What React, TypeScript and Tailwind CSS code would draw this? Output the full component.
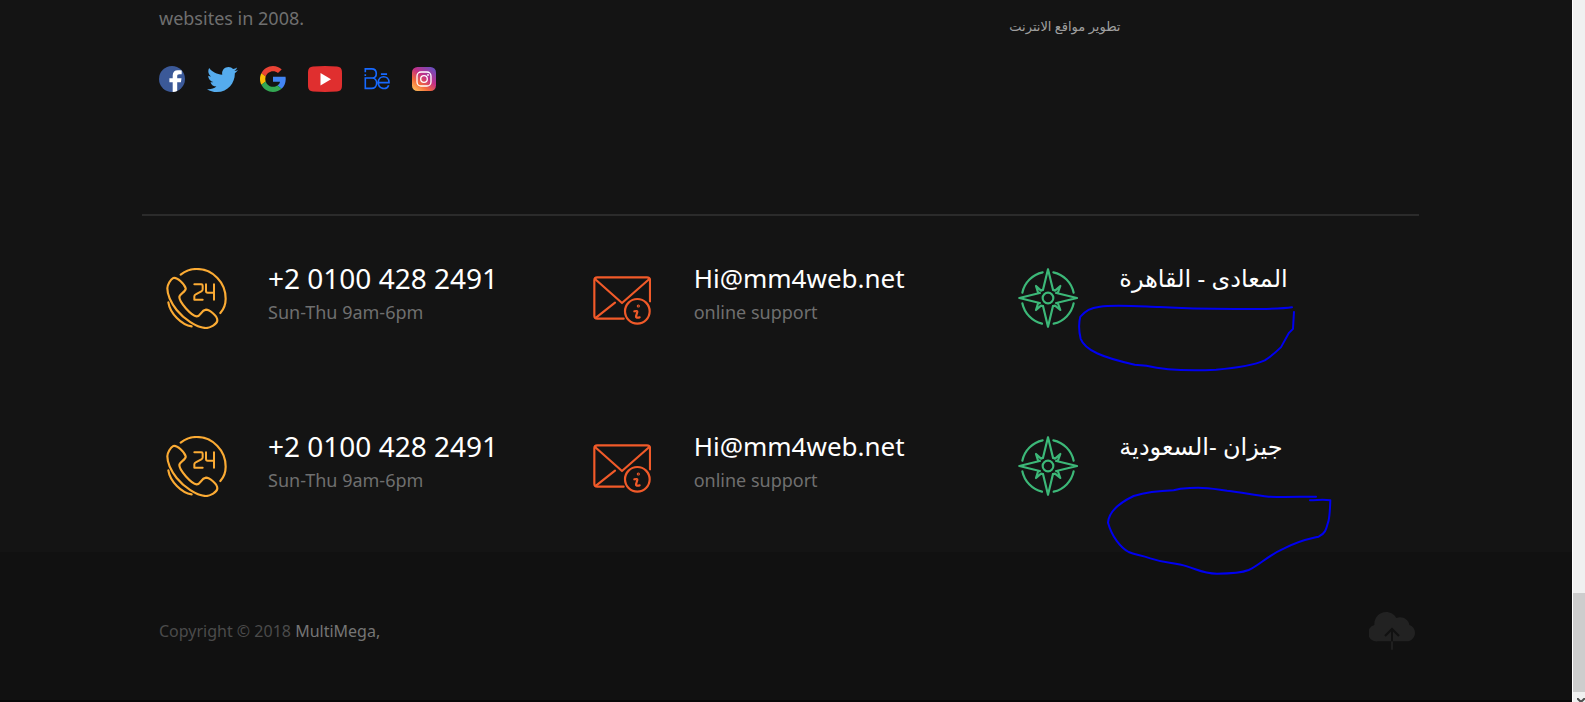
import { FaTwitter } from "react-icons/fa";

function FacebookIcon() {
  return (
    <svg viewBox="0 0 26 26" className="h-[26px] w-[26px]" aria-hidden="true">
      <circle cx="13" cy="13" r="13" fill="#3b5998" />
      <path
        d="M13.7 25.9v-9.600h-3.300v-4h3.300V9.600c0-3.500 2-5.300 5.100-5.300 1.500 0 2.800.1 3.900.3v3.700h-2.400c-1.700 0-2.100.8-2.100 2v2h4.300l-.6 4h-3.700v8.600a13 13 0 0 1-4.500 1z"
        fill="#fff"
      />
    </svg>
  );
}

function GoogleIcon() {
  return (
    <svg viewBox="0 0 48 48" className="h-[26px] w-[26px]" aria-hidden="true">
      <path fill="#EA4335" d="M24 9.5c3.54 0 6.71 1.22 9.21 3.6l6.85-6.85C35.9 2.38 30.47 0 24 0 14.62 0 6.51 5.38 2.56 13.22l7.98 6.19C12.43 13.72 17.74 9.5 24 9.5z" />
      <path fill="#4285F4" d="M47.5 24.55c0-1.57-.15-3.09-.38-4.55H24v9.02h12.94c-.58 2.96-2.26 5.48-4.78 7.18l7.73 6c4.51-4.18 7.61-10.36 7.61-17.65z" />
      <path fill="#FBBC05" d="M10.53 28.59c-.48-1.45-.76-2.99-.76-4.59s.27-3.14.76-4.59l-7.98-6.19C.92 16.46 0 20.12 0 24c0 3.88.92 7.54 2.56 10.78l7.97-6.19z" />
      <path fill="#34A853" d="M24 48c6.48 0 11.93-2.13 15.89-5.81l-7.73-6c-2.15 1.45-4.92 2.3-8.16 2.3-6.26 0-11.57-4.22-13.47-9.91l-7.98 6.19C6.51 42.62 14.62 48 24 48z" />
    </svg>
  );
}

function YoutubeIcon() {
  return (
    <svg viewBox="0 0 34 26" className="h-[26px] w-[34px]" aria-hidden="true">
      <path d="M5 .5Q17-.4 29 .5q4.600.3 4.900 4.500.4 8 0 16-.3 4.200-4.900 4.500-12 .9-24 0Q.4 25.200.1 21q-.4-8 0-16Q.4.800 5 .5z" fill="#e02f2f" />
      <path d="M12.500 7v12.400l10.500-6.200z" fill="#fff" />
    </svg>
  );
}

function BehanceIcon() {
  return (
    <svg viewBox="667 197 80 78" className="h-[26px] w-[26px]" fill="none" stroke="#1769ff" strokeWidth="5" aria-hidden="true">
      <path d="M671 215V205h20c18 0 18 27 2 28h-14M671 221v6M692 233c19 1 19 32-2 32h-19v-32h8M719 221h19M712 247h32c0-24-33-24-33 0 0 21 26 24 32 8" />
    </svg>
  );
}

function InstagramIcon() {
  return (
    <svg viewBox="0 0 24 24" className="h-6 w-6" fill="none" aria-hidden="true">
      <defs>
        <linearGradient id="insta" x1="2" y1="24" x2="20" y2="0" gradientUnits="userSpaceOnUse">
          <stop offset="0" stopColor="#ffc45c" />
          <stop offset=".3" stopColor="#f36b3b" />
          <stop offset=".6" stopColor="#c32f87" />
          <stop offset="1" stopColor="#6a4fc0" />
        </linearGradient>
      </defs>
      <rect width="24" height="24" rx="5.500" fill="url(#insta)" />
      <rect x="5" y="5" width="14" height="14" rx="4" stroke="#fff" strokeWidth="1.300" />
      <circle cx="12" cy="12" r="3.300" stroke="#fff" strokeWidth="1.300" />
      <circle cx="16" cy="8" r=".9" fill="#fff" />
    </svg>
  );
}

function PhoneIcon() {
  return (
    <svg viewBox="48 39 183 183" className="h-[61px] w-[61px]" fill="none" stroke="#fbab34" strokeWidth="6.500" strokeLinecap="round" strokeLinejoin="round" aria-hidden="true">
      <path d="M92 59Q114 42 140 42A87 89 0 0 1 227 131Q227 156 211 174" />
      <path d="M52 100C52 90 62 72 70 69C82 66 104 88 107 100C109 110 88 116 88 126C88 142 124 182 140 184C152 185 152 166 168 164C178 164 202 182 202 196C202 208 180 219 168 219C140 219 100 190 80 165C62 142 52 120 52 100Z" />
      <path d="M55 142C60 175 95 210 125 214" />
      <path d="M133 88h21q4 0 4 4v11q0 4-4 6l-17 9q-4 2-4 6v10h25M168 88v20q0 5 5 5h19M192 88v46" strokeWidth="6" />
    </svg>
  );
}

function MailIcon() {
  return (
    <svg viewBox="40 78 174 147" className="h-[49px] w-[58px]" fill="none" stroke="#f15a29" strokeWidth="6.500" strokeLinecap="round" strokeLinejoin="round" aria-hidden="true">
      <path d="M132 206H53Q44 206 44 197V91Q44 82 53 82H202Q211 82 211 91V154" />
      <path d="M46 87L127 159L209 87M50 202L106 158" />
      <circle cx="173" cy="184" r="37" />
      <path d="M164 184q10-3 9 2l-4 13q-1 6 11 3" />
      <circle cx="176" cy="168" r="1.500" />
    </svg>
  );
}

function CompassIcon() {
  return (
    <svg viewBox="53 54 180 180" className="h-[60px] w-[60px]" fill="none" stroke="#3cb878" strokeWidth="6.500" strokeLinecap="round" strokeLinejoin="round" aria-hidden="true">
      <path d="M143 58L128 119M143 58L158 119M230 144L168 129M230 144L168 159M143 230L158 168M143 230L128 168M57 144L118 129M57 144L118 159" />
      <path d="M128 119L122 122L107 108L113 127L118 129M158 119L164 122L180 108L173 127L168 129M168 159L173 161L180 180L164 167L158 168M128 168L122 167L107 180L113 161L118 159" />
      <circle cx="143" cy="144" r="16" />
      <path d="M66 128A79 79 0 0 1 127 67M159 67A79 79 0 0 1 220 128M220 160A79 79 0 0 1 160 221M125 221A79 79 0 0 1 66 160" />
    </svg>
  );
}

function CloudUpIcon() {
  return (
    <svg viewBox="87 215 138 114" className="h-[38px] w-[46px]" fill="none" aria-hidden="true">
      <path d="M112 303a25 25 0 0 1-9-49c-1-22 15-39 35-39 13 0 25 7 31 18 18-7 37 4 39 21 10 3 17 12 17 23 0 14-11 26-25 26z" fill="#222" />
      <path d="M156 303v25" stroke="#1f1f1f" strokeWidth="6" />
      <path d="M156 303V266M135 287L156 266L177 287" stroke="#111" strokeWidth="6" />
    </svg>
  );
}

const socials = [
  { label: "Facebook", icon: <FacebookIcon /> },
  { label: "Twitter", icon: <FaTwitter size={31} color="#55acee" className="h-[31px] w-[31px]" /> },
  { label: "Google", icon: <GoogleIcon /> },
  { label: "YouTube", icon: <YoutubeIcon /> },
  { label: "Behance", icon: <BehanceIcon /> },
  { label: "Instagram", icon: <InstagramIcon /> },
];

function CircleAroundCairo() {
  return (
    <svg viewBox="235 160 655 205" className="pointer-events-none absolute top-9 left-[85px] h-[68px] w-[218px]" fill="none" stroke="#0000f0" strokeWidth="6" strokeLinecap="round" strokeLinejoin="round" aria-hidden="true">
      <path d="M879 170C830 178 600 176 480 169C400 166 340 162 300 168C270 172 258 180 241 198C235 220 236 240 242 265C255 300 310 322 405 343L440 346C500 360 590 361 650 358C720 352 770 342 797 330C815 318 830 306 846 290L870 247L882 235L885 184" />
    </svg>
  );
}

function CircleAroundJazan() {
  return (
    <svg viewBox="320 198 675 267" className="pointer-events-none absolute top-[50px] left-[114px] h-[89px] w-[225px]" fill="none" stroke="#0000f0" strokeWidth="6" strokeLinecap="round" strokeLinejoin="round" aria-hidden="true">
      <path d="M947 230C900 230 850 232 805 230C760 225 730 218 680 212C620 202 590 202 540 206L520 211C460 213 430 219 400 228C350 252 325 280 323 308C335 350 360 382 385 396C405 405 420 404 450 415C500 432 520 426 560 439C600 452 610 460 650 461C690 461 720 460 745 450C780 434 800 408 850 386C900 360 930 356 955 350C980 338 978 320 984 305C989 285 989 260 990 241C970 238 960 240 929 241" />
    </svg>
  );
}

const offices = [
  { place: "المعادى - القاهرة", mark: <CircleAroundCairo /> },
  { place: "جيزان -السعودية", mark: <CircleAroundJazan /> },
];

export default function App() {
  return (
    <div className="flex min-h-screen overflow-hidden bg-[#141414] font-['Noto_Sans','DejaVu_Sans',sans-serif] text-[#6f6f6f]">
      <div className="flex min-w-0 flex-1 flex-col">
        <main className="flex flex-col pr-[153px] pl-[142px]">
          <div className="grid h-[216px] grid-cols-3 border-b-2 border-[#2b2b2b]">
            <div className="col-span-2 px-[17px] pt-1">
              <p className="text-lg leading-7">websites in 2008.</p>
              <nav aria-label="Social" className="mt-[31px] flex h-8 items-center gap-[22px]">
                {socials.map((s) => (
                  <a key={s.label} href="#" aria-label={s.label}>
                    {s.icon}
                  </a>
                ))}
              </nav>
            </div>
            <div className="px-4 pt-4">
              <p lang="ar" className="text-[13px] leading-5 text-[#a0a0a0]">تطوير مواقع الانترنت</p>
            </div>
          </div>
          {offices.map((o) => (
            <section key={o.place} className="grid h-[168px] grid-cols-3 pt-[52px]">
              <div className="flex items-start pl-6">
                <div className="w-[102px] shrink-0">
                  <PhoneIcon />
                </div>
                <div>
                  <h3 className="mt-[-8px] text-[28px] leading-9 text-white">+2 0100 428 2491</h3>
                  <p className="text-lg leading-8">Sun-Thu 9am-6pm</p>
                </div>
              </div>
              <div className="flex items-start pl-[25px]">
                <div className="w-[101px] shrink-0 pt-2">
                  <MailIcon />
                </div>
                <div>
                  <h3 className="mt-[-8px] text-[26px] leading-9 text-white">Hi@mm4web.net</h3>
                  <p className="text-lg leading-8">online support</p>
                </div>
              </div>
              <div className="relative flex items-start pl-[25px]">
                <div className="w-[101px] shrink-0">
                  <CompassIcon />
                </div>
                <h3 lang="ar" dir="rtl" className="mt-[-8px] text-2xl leading-9 text-white">{o.place}</h3>
                {o.mark}
              </div>
            </section>
          ))}
        </main>
        <footer className="flex flex-1 items-start justify-between border-b-2 border-[#080808] bg-[#111] pt-[60px] pr-[157px] pl-[159px]">
          <p className="pt-[7px] text-base leading-6 text-[#4b4b4b]">
            Copyright © 2018 <a href="#" className="text-[#757575]">MultiMega,</a>
          </p>
          <a href="#" aria-label="Back to top">
            <CloudUpIcon />
          </a>
        </footer>
      </div>
      <div className="flex w-[13px] shrink-0 flex-col border-l border-white bg-[#f0f0f0]" aria-hidden="true">
        <div className="flex-1" />
        <div className="h-[99px] bg-[#cdcdcd]" />
        <div className="flex h-[10px] items-end justify-end overflow-hidden">
          <svg viewBox="0 0 8 4" className="h-1 w-2" fill="none" stroke="#505050" strokeWidth="2">
            <path d="M0 0L4 4L8 0" />
          </svg>
        </div>
      </div>
    </div>
  );
}
